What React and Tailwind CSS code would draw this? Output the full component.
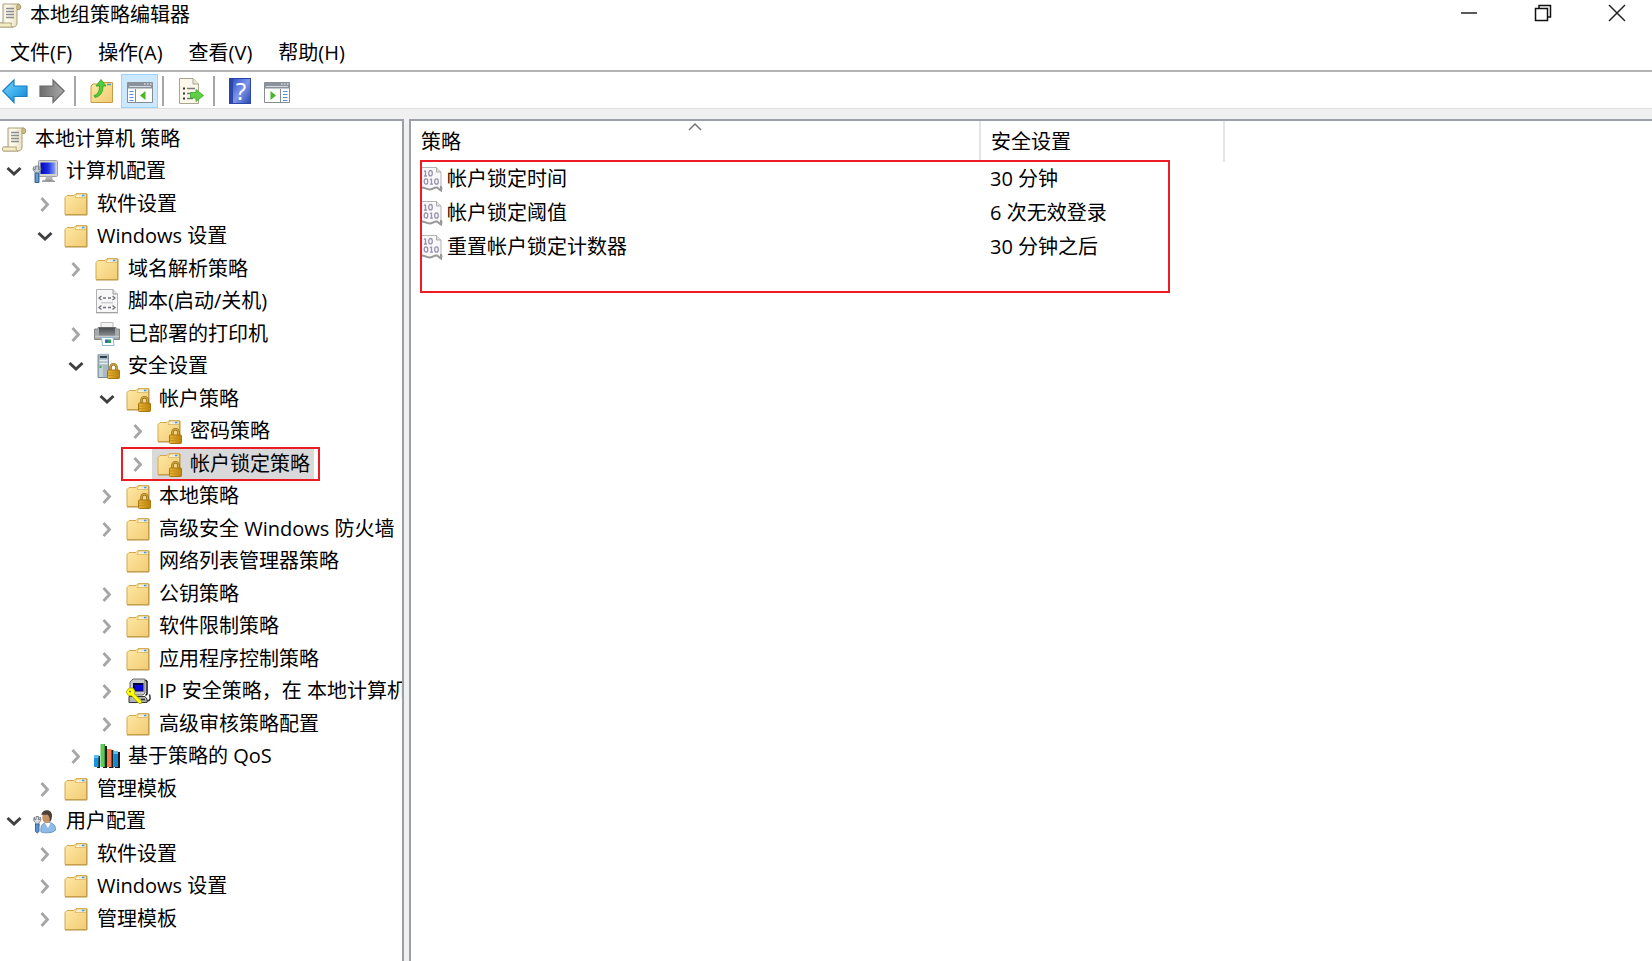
import React, { useState } from "react";

const levels = ["pl-px", "pl-0", "pl-[31px]", "pl-[62px]", "pl-[93px]", "pl-[124px]"];

const treeItems = [
  { id: 1, level: 0, icon: "scroll", label: "本地计算机 策略" },
  { id: 2, level: 1, icon: "computer", label: "计算机配置", state: "open" },
  { id: 3, level: 2, icon: "folder", label: "软件设置", state: "closed" },
  { id: 4, level: 2, icon: "folder", label: "Windows 设置", state: "open" },
  { id: 5, level: 3, icon: "folder", label: "域名解析策略", state: "closed" },
  { id: 6, level: 3, icon: "script", label: "脚本(启动/关机)" },
  { id: 7, level: 3, icon: "printer", label: "已部署的打印机", state: "closed" },
  { id: 8, level: 3, icon: "server", label: "安全设置", state: "open" },
  { id: 9, level: 4, icon: "locked", label: "帐户策略", state: "open" },
  { id: 10, level: 5, icon: "locked", label: "密码策略", state: "closed" },
  { id: 11, level: 5, icon: "locked", label: "帐户锁定策略", state: "closed", marked: true },
  { id: 12, level: 4, icon: "locked", label: "本地策略", state: "closed" },
  { id: 13, level: 4, icon: "folder", label: "高级安全 Windows 防火墙", state: "closed" },
  { id: 14, level: 4, icon: "folder", label: "网络列表管理器策略" },
  { id: 15, level: 4, icon: "folder", label: "公钥策略", state: "closed" },
  { id: 16, level: 4, icon: "folder", label: "软件限制策略", state: "closed" },
  { id: 17, level: 4, icon: "folder", label: "应用程序控制策略", state: "closed" },
  { id: 18, level: 4, icon: "ipsec", label: "IP 安全策略，在 本地计算机", state: "closed" },
  { id: 19, level: 4, icon: "folder", label: "高级审核策略配置", state: "closed" },
  { id: 20, level: 3, icon: "qos", label: "基于策略的 QoS", state: "closed" },
  { id: 21, level: 2, icon: "folder", label: "管理模板", state: "closed" },
  { id: 22, level: 1, icon: "user", label: "用户配置", state: "open" },
  { id: 23, level: 2, icon: "folder", label: "软件设置", state: "closed" },
  { id: 24, level: 2, icon: "folder", label: "Windows 设置", state: "closed" },
  { id: 25, level: 2, icon: "folder", label: "管理模板", state: "closed" },
];

const policies = [
  { name: "帐户锁定时间", value: "30 分钟" },
  { name: "帐户锁定阈值", value: "6 次无效登录" },
  { name: "重置帐户锁定计数器", value: "30 分钟之后" },
];

const menus = ["文件(F)", "操作(A)", "查看(V)", "帮助(H)"];

const Svg = ({ children }) => (
  <svg viewBox="0 0 26 26" className="size-[26px] shrink-0" aria-hidden="true">
    {children}
  </svg>
);

// Shared gradients, referenced by id from the icons below
const Gradients = () => (
  <svg className="absolute size-0" aria-hidden="true">
    <defs>
      <linearGradient id="gFolder" x1="0" y1="0" x2="1" y2="1">
        <stop offset="0" stopColor="#ffe9a6" />
        <stop offset="1" stopColor="#f1cb73" />
      </linearGradient>
      <linearGradient id="gLock" x1="0" y1="0" x2="1" y2="0">
        <stop offset="0" stopColor="#e9b93a" />
        <stop offset="1" stopColor="#b67c08" />
      </linearGradient>
      <linearGradient id="gPaper" x1="0" y1="0" x2="1" y2="0">
        <stop offset="0" stopColor="#d9cfa6" />
        <stop offset="0.4" stopColor="#fffdf0" />
        <stop offset="1" stopColor="#e2d8b0" />
      </linearGradient>
      <linearGradient id="gBlue" x1="0" y1="0" x2="1" y2="1">
        <stop offset="0" stopColor="#7fd4fa" />
        <stop offset="0.5" stopColor="#3fb0ee" />
        <stop offset="1" stopColor="#0a7fd0" />
      </linearGradient>
      <linearGradient id="gGray" x1="0" y1="0" x2="1" y2="0">
        <stop offset="0" stopColor="#6e6e6e" />
        <stop offset="1" stopColor="#a9a9a9" />
      </linearGradient>
      <linearGradient id="gScreen" x1="0" y1="0" x2="1" y2="0">
        <stop offset="0" stopColor="#0207b8" />
        <stop offset="0.5" stopColor="#1c2fe0" />
        <stop offset="1" stopColor="#8fa6f5" />
      </linearGradient>
      <linearGradient id="gPrinter" x1="0" y1="0" x2="0" y2="1">
        <stop offset="0" stopColor="#45494c" />
        <stop offset="1" stopColor="#8a8e91" />
      </linearGradient>
    </defs>
  </svg>
);

const FolderShape = () => (
  <>
    <path d="M2 6.5L4 4.5H11L13 2.5H23.5V23.5H2Z" fill="url(#gFolder)" stroke="#d3a94f" />
    <path d="M12 6.5L14 3H23V6.5Z" fill="#fff3cf" stroke="#dcb55e" strokeWidth="0.8" />
    <path d="M16 4.5H20" stroke="#d8e6ee" strokeWidth="1.6" />
    <path d="M19 4.5H21.5" stroke="#4a9ad0" strokeWidth="1.6" />
    <path d="M24 3V24H2" fill="none" stroke="#b99447" />
  </>
);

const LockShape = () => (
  <>
    <path d="M16.500 18V14.5a3 3.3 0 0 1 6 0V18" fill="none" stroke="#8d6a1c" strokeWidth="2.6" />
    <path d="M16.500 18V14.5a3 3.3 0 0 1 6 0V18" fill="none" stroke="#d3a437" strokeWidth="1.2" />
    <rect x="13.5" y="17" width="12" height="8.5" rx="0.8" fill="url(#gLock)" stroke="#a8780f" />
    <path d="M14 20H25M14 22.5H25" stroke="#c8921a" />
  </>
);

const ScrollIcon = () => (
  <Svg>
    <path d="M7 2H22C25 2 25.5 6 23 7.5H21V21C21 24 19 25 17 25H3C1 25 1 21 3 21H7Z" fill="url(#gPaper)" stroke="#a99f7c" />
    <path d="M22 2C20.500 3 20.500 6.500 21 7.500H23.500C25.500 6 25 2 22 2Z" fill="#cdbd83" stroke="#a0946a" strokeWidth="0.8" />
    <path d="M3 21H15.500C14.500 22 15 24.500 17 25H3C1 25 1 21 3 21Z" fill="#f6edc5" stroke="#a99f7c" strokeWidth="0.9" />
    <path d="M10 6.500H18M10 9.500H18M10 12.500H18M10 15.500H18" stroke="#8b8c92" strokeWidth="1.300" />
  </Svg>
);

const ComputerIcon = () => (
  <Svg>
    <rect x="6.500" y="2.500" width="19" height="16" rx="1" fill="#d5d5cf" stroke="#a2a29c" />
    <rect x="8.500" y="4.500" width="15" height="11.500" fill="url(#gScreen)" />
    <path d="M14 18.500H20L21 22H13Z" fill="#b5b5b5" />
    <path d="M10 23.500C12 21.500 21 21.500 23 23.500Z" fill="#9b9b9b" stroke="#888" strokeWidth="0.700" />
    <path d="M2 8.500C0.500 10.500 1 13 3 14V24.500H7V14C9 13 9.500 10.500 8 8.500V11.500H6.500V8H3.500V11.500H2Z" fill="#c5cdd3" stroke="#76818a" strokeWidth="0.900" />
    <path d="M3.300 15H6.700V24.500H3.300Z" fill="#6a9fd4" stroke="#2c5d98" strokeWidth="0.900" />
  </Svg>
);

const ScriptIcon = () => (
  <Svg>
    <path d="M2.500 1.500H19L23.500 6V24.500H2.500Z" fill="#f7f7f7" stroke="#b2b2b2" />
    <path d="M19 1.500V6H23.500" fill="#e4e4e4" stroke="#9b9b9b" />
    <path d="M7.500 8L5 10L7.500 12M18.500 8L21 10L18.500 12M7.500 17.500L5 19.500L7.500 21.500M18.500 17.500L21 19.500L18.500 21.500" fill="none" stroke="#707078" strokeWidth="1.300" />
    <path d="M9 10H12M14 10H17M9 19.500H12M14 19.500H17" stroke="#707078" strokeWidth="1.300" />
    <path d="M7 14.800H19" stroke="#b8b8c4" />
    <path d="M2 24.800H24" stroke="#9a9a9a" />
  </Svg>
);

const PrinterIcon = () => (
  <Svg>
    <path d="M7 1.500H19V9H7Z" fill="#f3f3f3" stroke="#bbb" />
    <path d="M0.500 8H4V6.500H22V8H25.500V18.500H0.500Z" fill="#a6a8aa" stroke="#85878a" />
    <path d="M5 6.500H21V15H5Z" fill="url(#gPrinter)" />
    <path d="M1 15.500H25" stroke="#c6c8ca" strokeWidth="1.500" />
    <path d="M7.500 16.500H19L20 24.500H8.500Z" fill="#fff" stroke="#8db9d6" />
    <path d="M11 18.500H14V22H11Z" fill="#1d74c4" />
    <path d="M14 18.500H17V22H14Z" fill="#33a05b" />
    <path d="M23 11.500H24.500" stroke="#7be07b" strokeWidth="1.200" />
  </Svg>
);

const ServerIcon = () => (
  <Svg>
    <path d="M4 1.500H14.500V24.500H4Z" fill="#a9b9c3" stroke="#7c8d98" />
    <path d="M4 1.500L6 0.500H15.500L14.500 1.500Z" fill="#d7e0e5" />
    <path d="M6 4H13" stroke="#1f3540" strokeWidth="1.800" />
    <path d="M5.500 7.500H13.500M5.500 10.500H13.500" stroke="#e6edf0" strokeWidth="1.600" />
    <path d="M5 13H9V24H5Z" fill="#c3d0d7" />
    <rect x="5.500" y="13" width="2" height="2" fill="#3fae4b" />
    <LockShape />
  </Svg>
);

const IpsecIcon = () => (
  <Svg>
    <path d="M5 4L8 1H20V15L18 17H5Z" fill="#c9c9c9" stroke="#6a6a6a" />
    <path d="M20.500 2L22 3.500V16L20.500 17.500" fill="none" stroke="#111" strokeWidth="1.500" />
    <path d="M8 5H18.500V13.500H8Z" fill="#000040" />
    <path d="M9.500 7H18V12.500H9.500Z" fill="#0505d8" />
    <path d="M4 18.500H20L22 21V24.500H4Z" fill="#b3b3b3" stroke="#333" />
    <path d="M16 21.500H20" stroke="#333" strokeWidth="1.500" />
    <path d="M22 23C25.500 23 25.500 20 24.500 16.500" fill="none" stroke="#333" strokeWidth="1.500" />
    <path d="M1 14L4 10H8L10 13L9.500 16L16.500 23V25.500H14L7 18L3.500 17.500Z" fill="#ffff00" stroke="#a3a300" strokeWidth="0.800" />
    <path d="M4 13.500H6" stroke="#777" strokeWidth="1.500" />
  </Svg>
);

const QosIcon = () => (
  <Svg>
    <path d="M3 13H6V25H3Z M9 3H13V25H9Z M15 7H19.500V25H15Z M21 9H26V25H21Z" fill="#1a1a1a" />
    <path d="M0 12H4.500V24H0Z" fill="#1d95dc" />
    <path d="M6.500 1H11V24H6.500Z" fill="#5fca56" />
    <path d="M13 6H17.500V24H13Z" fill="#f47c50" />
    <path d="M19.500 8H24V24H19.500Z" fill="#1687cf" />
    <path d="M0 12H4.500V15H0ZM19.500 8H24V11H19.500Z" fill="#5bc0f2" />
    <path d="M10 1H11V24H10Z" fill="#3aa236" />
  </Svg>
);

const UserIcon = () => (
  <Svg>
    <path d="M9 24C8 17 11 14.500 16 14.500C21 14.500 24 18 23.500 22C22 25 12 25.500 9 24Z" fill="#8ebce6" stroke="#5989ba" strokeWidth="0.800" />
    <path d="M12.500 14.500L16 20L18.500 15Z" fill="#fff" />
    <ellipse cx="14.500" cy="9.500" rx="4.200" ry="5.800" fill="#c89269" />
    <path d="M9.500 7C9.500 1 20 0 20 7.500C20 11 19 13 17.500 14.500C18 11 17.500 8 15.500 6.500C13.500 7 11.500 6.500 9.500 7Z" fill="#4b4138" />
    <path d="M2.500 9C1 11 1.500 13.500 3.500 14.500V18H7V14.500C9 13.500 9.500 11 8 9V11.500H6.500V8.500H4V11.500H2.500Z" fill="#d7dbde" stroke="#777e84" strokeWidth="0.900" />
    <path d="M3.500 16H7V23.500L5.200 25L3.500 23.500Z" fill="#5e92cc" stroke="#305f9d" strokeWidth="0.900" />
  </Svg>
);

const icons = {
  scroll: <ScrollIcon />,
  computer: <ComputerIcon />,
  folder: (
    <Svg>
      <FolderShape />
    </Svg>
  ),
  locked: (
    <Svg>
      <FolderShape />
      <LockShape />
    </Svg>
  ),
  script: <ScriptIcon />,
  printer: <PrinterIcon />,
  server: <ServerIcon />,
  ipsec: <IpsecIcon />,
  qos: <QosIcon />,
  user: <UserIcon />,
};

const PolicyIcon = () => (
  <svg viewBox="0 0 22 26" className="h-[26px] w-[22px] shrink-0" aria-hidden="true">
    <path d="M0.500 1.500H15.500L20 6V20C21 21 21.500 23 20.500 24.500C18 24.500 17 23 16 21.500C13 21 12 24 8 23.500C5 23 3 21.500 0.500 21.500Z" fill="#f8f8f8" stroke="#b4b4b4" />
    <path d="M15.500 1.500V6H20" fill="#e2e2e2" stroke="#ababab" />
    <path d="M1 21.500C4 21.500 5 23.500 8.500 23.500C12 23.500 13 21 16 21.500L20 24.500V20" fill="none" stroke="#999" strokeWidth="2" />
    <g fill="none" stroke="#9a92b0" strokeWidth="1.300">
      <path d="M4.500 4.500V10M3 5.500L4.500 4.500M3 10H6" />
      <ellipse cx="9.500" cy="7.200" rx="1.800" ry="2.700" />
      <ellipse cx="5" cy="15.500" rx="1.800" ry="2.700" />
      <path d="M10.500 12.800V18.200M9 13.800L10.500 12.800M9 18.200H12" />
      <ellipse cx="15.500" cy="15.500" rx="1.800" ry="2.700" />
    </g>
  </svg>
);

const Chevron = ({ open }) => (
  <svg viewBox="0 0 16 16" className="size-4" fill="none" aria-hidden="true">
    {open ? (
      <path d="M1.500 5L8 11L14.500 5" stroke="#404040" strokeWidth="3" />
    ) : (
      <path d="M4.500 2L10.500 8.500L4.500 15" stroke="#a6a6a6" strokeWidth="2.800" />
    )}
  </svg>
);

const PaneIcon = ({ flip }) => (
  <Svg>
    <path d="M0.500 4.500H25.500V24.500H0.500Z" fill="#fff" stroke="#868c94" />
    <path d="M0.500 4.500H25.500V10.500H0.500Z" fill="#8b929b" />
    <path d="M2 8.500H24" stroke="#d6dae0" />
    <path d="M17 6H18.500M20 6H21.500M23 6H24.500" stroke="#fff" />
    {flip ? (
      <>
        <path d="M16.500 11V24" stroke="#868c94" />
        <path d="M6.500 13V22L12 17.500Z" fill="#48b52c" />
        <path d="M19 13.500H23.500M19 16.500H23.500M19 19.500H23.500M19 22.500H23.500" stroke="#5d8fc4" strokeWidth="1.200" />
      </>
    ) : (
      <>
        <path d="M8.500 11V24" stroke="#868c94" />
        <path d="M18.500 13V22L13 17.500Z" fill="#48b52c" />
        <path d="M2.500 13.500H6.500M2.500 16.500H6.500M2.500 19.500H6.500M2.500 22.500H6.500" stroke="#5d8fc4" strokeWidth="1.200" />
      </>
    )}
  </Svg>
);

const ToolButton = ({ label, active, children }) => (
  <button
    type="button"
    aria-label={label}
    className={
      active
        ? "flex h-[34px] w-[37px] items-center justify-center border border-[#99d1ff] bg-[#cce8ff]"
        : "flex h-[34px] w-[37px] items-center justify-center hover:bg-[#e5f3ff]"
    }
  >
    {children}
  </button>
);

const Separator = () => <div className="h-[30px] w-0.5 bg-[#a6a6a6]" />;

const Toolbar = () => (
  <div className="flex h-[37px] items-center border-b border-[#e0e0e0] pt-0.5">
    <div className="-ml-1 flex pr-1">
      <ToolButton label="后退">
        <Svg>
          <path d="M0.800 13L12 2V8H25V18.500H12V24.500Z" fill="url(#gBlue)" stroke="#1b7fc0" strokeWidth="1.200" />
        </Svg>
      </ToolButton>
      <ToolButton label="前进">
        <Svg>
          <path d="M25.200 13L14 2V8H1V18.500H14V24.500Z" fill="url(#gGray)" stroke="#6b6b6b" strokeWidth="1.200" />
        </Svg>
      </ToolButton>
    </div>
    <Separator />
    <div className="flex pr-1 pl-2">
      <ToolButton label="上一级">
        <Svg>
          <path d="M1 8L3 6H10L12 4.500H22.500V24.500H1Z" fill="url(#gFolder)" stroke="#c69b45" />
          <path d="M17 6.500H21" stroke="#4a9ad0" strokeWidth="1.500" />
          <path d="M4 17.500C8.500 16.500 9.500 12 9.500 8H6L11 1.500L16 8H13C13 13 11.500 18 5 19.500Z" fill="#4fce39" stroke="#2e9c22" strokeWidth="0.800" />
        </Svg>
      </ToolButton>
      <ToolButton label="显示/隐藏控制台树" active>
        <PaneIcon />
      </ToolButton>
    </div>
    <Separator />
    <div className="flex pr-1 pl-2">
      <ToolButton label="导出列表">
        <Svg>
          <path d="M1.500 0.500H15L20.500 6V25.500H1.500Z" fill="#fbf8ea" stroke="#a9a491" />
          <path d="M15 0.500V6H20.500" fill="#ebe6d0" stroke="#a9a491" />
          <path d="M5 10.500H7M5 15.500H7M5 20.500H7" stroke="#333" strokeWidth="2" />
          <path d="M9 10.500H17M9 15.500H13M9 20.500H15" stroke="#777" strokeWidth="1.300" />
          <path d="M12.500 14.500H18V11.500L25.500 17.500L18 23.500V20H12.500Z" fill="#5fd045" stroke="#37a428" strokeWidth="0.800" />
        </Svg>
      </ToolButton>
    </div>
    <Separator />
    <div className="flex pl-1.5">
      <ToolButton label="帮助">
        <span className="flex h-[26px] w-[22px] items-center justify-center border border-l-4 border-[#2b45a8] bg-linear-to-br from-[#3453cc] via-[#7f95e8] to-[#2d49b4] text-2xl leading-none text-white">
          ?
        </span>
      </ToolButton>
      <ToolButton label="显示/隐藏操作窗格">
        <PaneIcon flip />
      </ToolButton>
    </div>
  </div>
);

const TitleBar = () => (
  <header className="flex h-[30px] items-start justify-between">
    <div className="flex h-full items-center gap-2">
      <span className="-ml-1">
        <ScrollIcon />
      </span>
      <h1>本地组策略编辑器</h1>
    </div>
    <div className="flex gap-1">
      <button type="button" aria-label="最小化" className="flex h-[26px] w-[70px] items-center justify-center">
        <svg viewBox="0 0 18 18" className="size-[18px]" fill="none" stroke="#222" strokeWidth="1.500">
          <path d="M1 9H17" />
        </svg>
      </button>
      <button type="button" aria-label="还原" className="flex h-[26px] w-[70px] items-center justify-center">
        <svg viewBox="0 0 18 18" className="size-[18px]" fill="none" stroke="#111" strokeWidth="1.500">
          <path d="M1.500 4.500H13.500V16.500H1.500Z" />
          <path d="M5 4V1.500H16.500V13H14" />
        </svg>
      </button>
      <button type="button" aria-label="关闭" className="flex h-[26px] w-[70px] items-center justify-center">
        <svg viewBox="0 0 18 18" className="size-[18px]" fill="none" stroke="#222" strokeWidth="1.500">
          <path d="M1 1L17 17M17 1L1 17" />
        </svg>
      </button>
    </div>
  </header>
);

const Tree = () => {
  const [selected, setSelected] = useState(11);

  return (
    <ul className="pt-px">
      {treeItems.map((item) => (
        <li
          key={item.id}
          className={`relative flex items-center odd:h-[33px] even:h-8 ${levels[item.level]}`}
        >
          {item.level > 0 && (
            <span className="flex w-7 shrink-0 justify-center">
              {item.state && (
                <button type="button" aria-label={item.label} aria-expanded={item.state === "open"}>
                  <Chevron open={item.state === "open"} />
                </button>
              )}
            </span>
          )}
          <button
            type="button"
            onClick={() => setSelected(item.id)}
            className={`flex h-[30px] shrink-0 items-center gap-2 pr-1 ${item.level > 0 ? "pl-1" : ""} ${
              selected === item.id ? "bg-[#d9d9d9]" : ""
            }`}
          >
            {icons[item.icon]}
            <span>{item.label}</span>
          </button>
          {item.marked && (
            <span className="pointer-events-none absolute top-0 left-[121px] h-[34px] w-[199px] border-2 border-[#ed1c24]" />
          )}
        </li>
      ))}
    </ul>
  );
};

const PolicyTable = () => (
  <div className="relative">
    <table className="w-full table-fixed border-collapse text-left">
      <thead>
        <tr className="h-[41px]">
          <th className="relative w-[569px] border-r-2 border-[#e5e5e5] pl-2.5 font-normal">
            策略
            <svg viewBox="0 0 14 8" className="absolute top-0.5 left-1/2 h-2 w-3.5 -translate-x-1/2" fill="none">
              <path d="M1 7L7 1L13 7" stroke="#777" strokeWidth="1.500" />
            </svg>
          </th>
          <th className="w-[244px] border-r-2 border-[#e5e5e5] pl-2.5 font-normal">安全设置</th>
          <td />
        </tr>
      </thead>
      <tbody>
        {policies.map((policy) => (
          <tr key={policy.name} className="h-[34px]">
            <td className="pl-2.5">
              <div className="flex items-center gap-1">
                <PolicyIcon />
                {policy.name}
              </div>
            </td>
            <td className="pl-2.5">{policy.value}</td>
            <td />
          </tr>
        ))}
      </tbody>
    </table>
    <div className="pointer-events-none absolute top-[39px] left-[9px] h-[133px] w-[750px] border-2 border-[#ed1c24]" />
  </div>
);

const App = () => {
  return (
    <div className="flex min-h-screen flex-col overflow-hidden bg-white font-['Open_Sans','Noto_Sans_CJK_SC',sans-serif] text-[20px] leading-6 whitespace-nowrap text-black">
      <Gradients />
      <TitleBar />
      <nav className="flex h-[42px] items-center gap-[26px] border-b-2 border-[#b4b4b4] pt-1.5 pl-2.5">
        {menus.map((menu) => (
          <button key={menu} type="button">
            {menu}
          </button>
        ))}
      </nav>
      <Toolbar />
      <div className="h-2.5 bg-[#f0f0f0]" />
      <main className="flex flex-1">
        <aside className="w-[404px] shrink-0 overflow-hidden border-t-2 border-r-2 border-[#9a9fa9]">
          <Tree />
        </aside>
        <div className="w-[5px] shrink-0 bg-[#f0f0f0]" />
        <section className="min-w-0 flex-1 border-t-2 border-l-2 border-[#9a9fa9]">
          <PolicyTable />
        </section>
      </main>
    </div>
  );
};

export default App;
